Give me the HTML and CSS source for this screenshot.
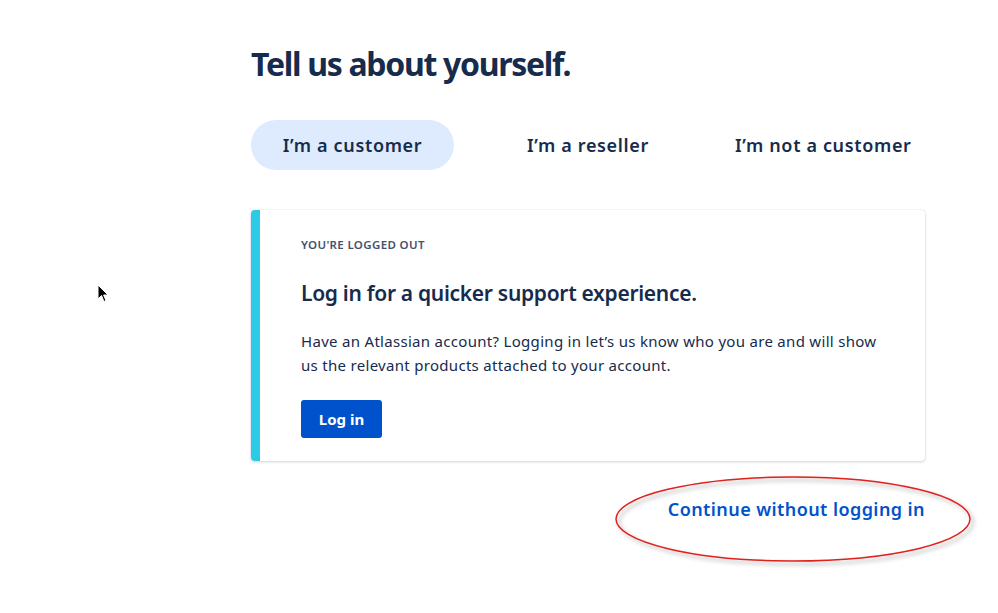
FILE: index.html
```html
<!DOCTYPE html>
<html lang="en">
<head>
<meta charset="utf-8">
<title>Tell us about yourself</title>
<link rel="stylesheet" href="styles.css">
</head>
<body>
<svg class="cursor" width="12" height="20" viewBox="0 0 12 20"><path d="M1 1 L1 15 L4.5 11.5 L7 17.5 L9 16.6 L6.6 11 L11 11 Z" fill="#000" stroke="#fff" stroke-width="1"/></svg>
<main class="page">
  <h1 class="title">Tell us about yourself.</h1>
  <div class="tabs">
    <button class="tab tab-active">I’m a customer</button>
    <button class="tab">I’m a reseller</button>
    <button class="tab">I’m not a customer</button>
  </div>
  <section class="card">
    <div class="card-accent"></div>
    <div class="card-body">
      <p class="eyebrow">YOU'RE LOGGED OUT</p>
      <h2 class="card-title">Log in for a quicker support experience.</h2>
      <p class="card-text">Have an Atlassian account? Logging in let’s us know who you are and will show us the relevant products attached to your account.</p>
      <button class="btn-primary">Log in</button>
    </div>
  </section>
  <div class="continue-row">
    <a class="continue" href="#">Continue without logging in</a>
  </div>
</main>
<svg class="ellipse" width="370" height="100" viewBox="0 0 370 100">
  <defs>
    <filter id="sh" x="-10%" y="-20%" width="120%" height="150%">
      <feDropShadow dx="3" dy="3" stdDeviation="2" flood-color="#000" flood-opacity="0.35"/>
    </filter>
  </defs>
  <ellipse cx="179" cy="45" rx="177" ry="42" fill="none" stroke="#e0201c" stroke-width="1.5" filter="url(#sh)"/>
</svg>
</body>
</html>
```
FILE: styles.css
```css
* { box-sizing: border-box; }
html, body { margin: 0; padding: 0; background: #fff; }
body {
  font-family: "Noto Sans", "Open Sans", sans-serif;
  color: #172B4D;
  position: relative;
  width: 998px;
  height: 613px;
  overflow: hidden;
}
.page {
  width: 674px;
  margin-left: 251px;
  padding-top: 40px;
}
.title {
  margin: 0;
  font-size: 32px;
  line-height: 48px;
  font-weight: 700;
  letter-spacing: -1.3px;
  color: #172B4D;
}
.tabs {
  display: flex;
  align-items: center;
  margin-top: 32px;
}
.tab {
  flex: none;
  font-family: inherit;
  border: 0;
  background: transparent;
  height: 50px;
  border-radius: 25px;
  padding: 0 32px;
  font-size: 18px;
  font-weight: 600;
  letter-spacing: 0.65px;
  color: #172B4D;
  cursor: pointer;
  white-space: nowrap;
}
.tab-active { background: #DEEBFF; width: 203px; padding: 0; }
.tabs .tab:nth-child(2) { margin-left: 41px; }
.tabs .tab:nth-child(3) { margin-left: 22px; }
.card {
  display: flex;
  margin-top: 40px;
  height: 251px;
  border-radius: 4px;
  background: #fff;
  box-shadow: 0 1px 3px rgba(9,30,66,0.18), 0 0 1px rgba(9,30,66,0.2);
  overflow: hidden;
}
.card-accent { width: 9px; background: #2BCBE8; flex: none; }
.card-body { padding: 27px 40px 0 41px; }
.eyebrow {
  margin: 0;
  font-size: 11.5px;
  font-weight: 600;
  color: #42526E;
  letter-spacing: 0.35px;
  line-height: 16px;
}
.card-title {
  margin: 26px 0 0;
  font-size: 21px;
  font-weight: 600;
  line-height: 28px;
  letter-spacing: -0.3px;
}
.card-text {
  margin: 22px 0 0;
  font-size: 15px;
  line-height: 24px;
  letter-spacing: 0.3px;
  color: #172B4D;
}
.btn-primary {
  margin-top: 23px;
  width: 81px;
  height: 38px;
  border: 0;
  border-radius: 3px;
  background: #0052CC;
  color: #fff;
  font-family: inherit;
  font-size: 15px;
  font-weight: 700;
}
.continue-row {
  display: flex;
  justify-content: flex-end;
  margin-top: 36px;
}
.continue {
  color: #0052CC;
  text-decoration: none;
  font-size: 18px;
  font-weight: 600;
  letter-spacing: 0.42px;
  line-height: 24px;
}
.cursor { position: absolute; left: 97px; top: 284px; }
.ellipse { position: absolute; left: 614px; top: 474px; }
```
